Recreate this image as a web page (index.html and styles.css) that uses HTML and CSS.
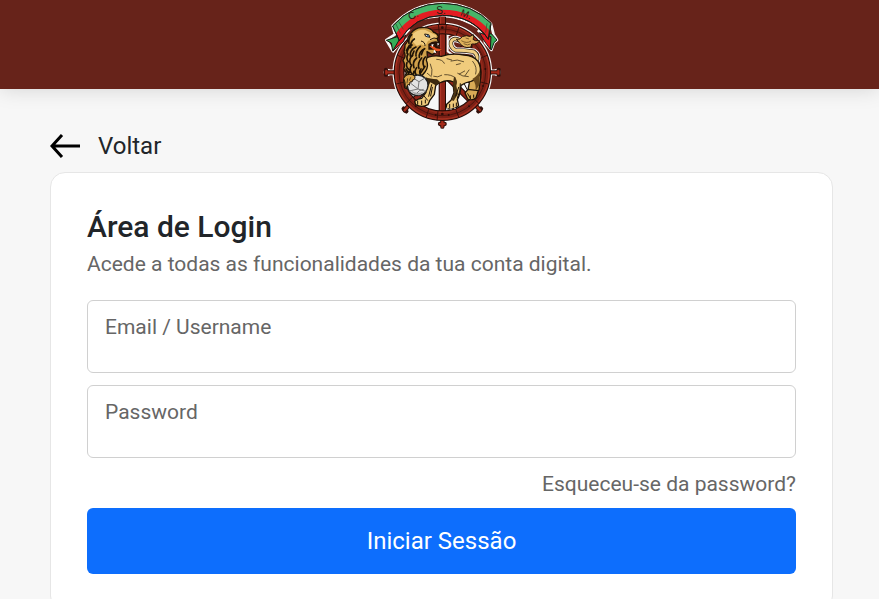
FILE: index.html
```
<!DOCTYPE html>
<html lang="pt">
<head>
  <meta charset="UTF-8" />
  <title>Área de Login</title>
  <meta name="viewport" content="width=device-width, initial-scale=1.0"/>
  <link rel="stylesheet" href="styles.css">
</head>
<body>

  <header class="header">
    <svg class="logo" viewBox="0 0 390 402" role="img" aria-label="CSM">
      <!-- white outline behind the upper half -->
      <g fill="none" stroke="#f7f7f7" stroke-linejoin="round" stroke-linecap="round">
        <circle cx="196" cy="217" r="132" stroke-width="35"/>
        <path d="M55 217H33M337 217h22" stroke-width="17"/>
        <circle cx="31" cy="217" r="6" stroke-width="10"/>
        <circle cx="361" cy="217" r="6" stroke-width="10"/>
        <path d="M47 78Q105 12 196 10Q287 12 342 72L350 104L360 120L351 128L343 150L324 128L322 112Q275 50 196 48Q115 50 70 122L66 132L48 154L28 120L54 103Z" stroke-width="8"/>
      </g>
      <path d="M82 217a114 114 0 0 1 228 0z" fill="#67231a"/>
      <path d="M82 217a114 114 0 0 0 228 0z" fill="#f7f7f7"/>
      <path d="M212 106v48l28 20h58q0-36-36-66q-24-16-50-2z" fill="#67231a" stroke="#f7f7f7" stroke-width="6" stroke-linejoin="round"/>
      <path d="M88 80q42-26 96-26v10q-46 2-84 26z" fill="#67231a"/>
      <path d="M208 54q50 2 96 34l-8 12q-42-32-88-34z" fill="#67231a"/>

      <!-- handles -->
      <g stroke-linecap="round">
        <g stroke="#32100b" stroke-width="13">
          <path d="M55 217H31M337 217h24M196 358v22M94 318l-11 13M298 318l11 13"/>
          <path d="M27 210v14M365 210v14M189 372h14M80 326l8 8M312 326l-8 8"/>
        </g>
        <g stroke="#a52a19" stroke-width="7">
          <path d="M55 217H31M337 217h24M196 358v22M94 318l-11 13M298 318l11 13"/>
          <path d="M28 213v8M364 213v8M190 372h12"/>
        </g>
      </g>

      <!-- wheel -->
      <g fill="none">
        <path d="M196 50V345" stroke="#250c08" stroke-width="22"/>
        <path d="M196 50V345" stroke="#8f2417" stroke-width="16"/>
        <path d="M191 50V345" stroke="#b5392a" stroke-width="3"/>
        <path d="M196 217L112 300M196 217l82 82M212 190l66-66" stroke="#250c08" stroke-width="18"/>
        <path d="M196 217L112 300M196 217l82 82M212 190l66-66" stroke="#8f2417" stroke-width="12"/>
        <circle cx="196" cy="217" r="130" stroke="#220b07" stroke-width="32"/>
        <circle cx="196" cy="217" r="130" stroke="#7d2015" stroke-width="26"/>
        <circle cx="196" cy="217" r="140" stroke="#a63121" stroke-width="4"/>
        <circle cx="196" cy="217" r="130" stroke="#4b150d" stroke-width="3"/>
        <circle cx="196" cy="217" r="121" stroke="#932a1b" stroke-width="4"/>
        <path d="M184 72l3 29M208 72l-3 29M145 80l10 28M247 80l-10 28M62 166l26 12M330 166l-26 12M334 252l-27-7M306 311l-21-21M246 354l-10-27M180 361l3-28M147 354l8-26M87 311l21-21M58 252l27-7" stroke="#3b100a" stroke-width="3"/>
      </g>
      <g fill="#2e0d08">
        <circle cx="325" cy="207" r="3"/><circle cx="318" cy="258" r="3"/><circle cx="276" cy="319" r="3"/>
        <circle cx="215" cy="345" r="3"/><circle cx="176" cy="345" r="3"/><circle cx="116" cy="319" r="3"/>
        <circle cx="196" cy="342" r="4"/><circle cx="196" cy="83" r="4"/>
      </g>

      <!-- tail -->
      <g fill="none" stroke-linecap="round" stroke-linejoin="round">
        <path d="M296 190Q308 167 290 155Q262 151 236 151Q219 142 222 126Q227 112 246 120L262 128" stroke="#f7f7f7" stroke-width="19"/>
        <path d="M296 190Q308 167 290 155Q262 151 236 151Q219 142 222 126Q227 112 246 120L262 128" stroke="#21160a" stroke-width="13"/>
        <path d="M296 190Q308 167 290 155Q262 151 236 151Q219 142 222 126Q227 112 246 120L262 128" stroke="#f0ce83" stroke-width="9"/>
      </g>
      <path d="M238 118Q246 127 254 136Q269 148 287 138Q279 137 284 132Q302 134 308 122Q293 124 288 118Q293 111 289 104Q279 113 269 107Q255 107 248 117Z" fill="#e0b25c" stroke="#21160a" stroke-width="3"/>
      <path d="M253 122q16 10 29 1M260 131q12 7 20 1M266 114l10 3" fill="none" stroke="#4d3514" stroke-width="2"/>

      <!-- body -->
      <g stroke="#1d1308" stroke-width="4" stroke-linejoin="round">
        <path d="M250 210Q256 240 277 248L273 270L288 279L306 270L311 232Q314 206 304 190Z" fill="#d9ab56"/>
        <path d="M273 268L264 279L272 297Q285 304 297 293L304 272Z" fill="#d9ab56"/>
        <path d="M139 179Q160 164 193 169Q224 158 261 165Q289 166 303 184Q314 203 309 224Q297 240 282 244Q266 246 252 256Q250 283 241 299L245 317Q228 332 207 325L209 313L222 301L231 278Q228 262 230 246Q209 238 192 247Q183 249 176 257L172 283L158 302L153 314Q135 324 116 314L113 304Q122 296 134 295L147 277L140 240Q124 209 139 179Z" fill="#f0cb7c"/>
        <path d="M95 209Q83 224 80 240L83 263Q93 270 100 259L116 241L132 225L136 200Z" fill="#d9a851"/>
        <path d="M101 101Q116 79 143 83Q162 84 169 96Q183 101 184 111Q178 119 186 126L187 135Q174 133 164 138L178 143L179 155L166 164L150 155Q153 169 148 181Q157 200 144 216Q128 238 105 227L91 236Q92 219 80 207Q86 196 78 181Q89 167 81 154Q85 143 84 134Q94 125 93 113Z" fill="#d0a04a"/>
      </g>
      <path d="M108 101Q124 87 145 90L163 99L178 106L177 113L166 120L153 122L145 139L133 133L119 137L108 126Z" fill="#f0cb7c"/>

      <!-- dark haunch and belly -->
      <path d="M231 230Q244 240 238 257L243 282L230 303L223 300L231 280L228 249Z" fill="#4a3413"/>
      <path d="M286 237Q303 228 309 210L307 255L295 273Q299 252 286 237Z" fill="#6b4a1c"/>
      <path d="M146 232Q158 237 180 238L190 247L176 256L160 247L152 263Z" fill="#3d2a10"/>

      <!-- mane and shadow strokes -->
      <g fill="none" stroke="#1c1207" stroke-width="5" stroke-linecap="round">
        <path d="M104 104q-11 11-8 26M112 117q-14 10-11 26M105 135q-15 10-15 25M117 141q-20 9-17 27M130 139q-15 13-13 29M143 146q-18 9-16 26M93 162q-7 13 1 23M107 166q-14 12-6 27M119 174q-14 12-8 29M134 174q-14 16-8 31M145 171q-12 12-4 29"/>
        <path d="M90 188q-5 11 5 20M104 195q-9 14 1 28M119 203q-9 11-1 22M132 207q-7 8-1 18M144 199q-9 14-15 22M87 207l10 17M97 136l-9 16M139 149l-6 15M111 153l-6 15M97 213l-6 19M111 214l-5 17"/>
        <path d="M89 242v18M99 236l-6 17M109 235l-5 16" stroke-width="3"/>
        <path d="M164 254l-9 35M142 289l10 12M166 262l-5 26M250 251q2 22-9 43M262 252l8 16M272 281l8 14M245 262l-9 26" stroke-width="3"/>
        <path d="M179 178q18 0 23 12M222 183q19-7 38 2M287 184q15 17 9 38M203 224q20-1 33 10M242 220q15 11 32 10M160 192q8 16 4 34M170 229q12 5 24-3M276 210l-12 17M263 213l-16 9M151 220l12 10M210 176l14 4M238 194l12-3" stroke-width="2"/>
        <path d="M122 303v10M134 303v11M145 300v9M218 313v10M229 312v9M238 309v8M280 287v9M290 285v7" stroke-width="3"/>
      </g>
      <path d="M208 325h4M220 327h4M232 325h4" stroke="#fff" stroke-width="3"/>

      <!-- face -->
      <path d="M143 102l12 2l4 8l-13-3z" fill="#fff" stroke="#20150a" stroke-width="3"/>
      <circle cx="153" cy="108" r="4" fill="#4c6784"/>
      <path d="M154 132Q169 119 187 126L188 134L176 136L195 149Q186 158 171 149L154 149Z" fill="#271308"/>
      <path d="M157 139q13-3 20 6l18 3q-9 11-24 1z" fill="#e8501f"/>
      <path d="M162 134l5 7l3-9zM181 129l1 8l5-6zM169 157l4-8l5 11z" fill="#fff"/>
      <path d="M132 123q13 3 12 15M159 119l12-5l10 2" fill="none" stroke="#211407" stroke-width="3"/>

      <!-- ball -->
      <circle cx="122" cy="256" r="31" fill="#e3e3e3" stroke="#202020" stroke-width="4"/>
      <path d="M106 233l20 12l20-12M126 245l-3 22l-27 6M123 267l23 7M96 246l27 21M120 279q5-9 20-11" fill="none" stroke="#777" stroke-width="3"/>
      <path d="M101 271q17 13 38 4l-9 10q-19 3-29-14z" fill="#a6a6a6"/>
      <path d="M80 235Q88 220 106 224Q119 229 111 239Q105 237 105 246Q97 242 97 256Q92 248 89 263Q83 260 84 247Z" fill="#d8a64c" stroke="#1d1308" stroke-width="3"/>
      <path d="M92 235l-2 15M101 232l-4 10" stroke="#1d1308" stroke-width="2"/>

      <!-- ribbon -->
      <g stroke="#191b16" stroke-width="3" stroke-linejoin="round">
        <path d="M67 108L28 121L43 129L47 153L65 134L76 113Z" fill="#36ad57"/>
        <path d="M67 119L47 153L80 124L86 105Z" fill="#e11b20"/>
        <path d="M326 99L330 125L343 150L351 128L360 120L344 102Z" fill="#36ad57"/>
        <path d="M307 98L322 123L340 148L342 110Z" fill="#e11b20"/>
        <path d="M47 78Q105 12 196 10Q287 12 342 70L334 118Q289 48 196 46Q112 48 67 122Z" fill="#e31d22"/>
        <path d="M47 78Q105 12 196 10Q287 12 342 70L339 93Q286 29 196 29Q110 29 57 100Z" fill="#47b568" stroke="none"/>
        <path d="M47 78Q105 12 196 10Q287 12 342 70L334 118Q289 48 196 46Q112 48 67 122Z" fill="none"/>
        <path d="M57 72l13 28M65 65l14 23M330 70l-4 28M338 76l-3 25" stroke="#24582d" stroke-width="2"/>
      </g>
      <g class="logo-letters">
        <text x="99" y="61" transform="rotate(-25 99 61)">C.</text>
        <text x="178" y="42">S.</text>
        <text x="248" y="46" transform="rotate(22 248 46)">M.</text>
      </g>
    </svg>
  </header>

  <main class="container">
    <a class="back-button" href="#">
      <svg class="back-arrow" viewBox="0 0 30 24" aria-hidden="true">
        <path d="M12 1L2 12L12 23M2 12H30"/>
      </svg>
      <span>Voltar</span>
    </a>

    <form class="card">
      <h1 class="title">Área de Login</h1>
      <p class="subtitle">Acede a todas as funcionalidades da tua conta digital.</p>

      <div class="field">
        <input type="text" id="username" autocomplete="username">
        <label for="username">Email / Username</label>
      </div>
      <div class="field">
        <input type="password" id="password" autocomplete="current-password">
        <label for="password">Password</label>
      </div>

      <a class="forgot" href="#">Esqueceu-se da password?</a>
      <button class="submit" type="submit">Iniciar Sessão</button>
    </form>
  </main>

</body>
</html>
```
FILE: styles.css
```
:root {
  --bg: #f7f7f7;
  --brand: #67231a;
  --primary: #0d6efd;
  --text: #212529;
  --muted: #666;
  --border: #d0d0d0;
}

* {
  box-sizing: border-box;
}

body {
  margin: 0;
  font-family: Roboto, sans-serif;
  background: var(--bg);
  color: var(--text);
}

.header {
  display: flex;
  justify-content: center;
  height: 89px;
  padding-left: 4px;
  background: var(--brand);
  box-shadow: 0 0 20px rgba(0, 0, 0, 0.15);
}

.logo {
  flex: none;
  width: 130px;
  height: 134px;
}

.logo-letters {
  font-family: "Liberation Sans", sans-serif;
  font-size: 30px;
  fill: #252014;
}

.container {
  padding: 39px 46px 0 50px;
}

.back-button {
  display: inline-flex;
  align-items: center;
  gap: 18px;
  height: 36px;
  font-size: 24px;
  line-height: 36px;
  color: var(--text);
  text-decoration: none;
}

.back-arrow {
  width: 30px;
  height: 24px;
  fill: none;
  stroke: #000;
  stroke-width: 3;
}

.card {
  display: flex;
  flex-direction: column;
  margin-top: 8px;
  padding: 36px;
  background: #fff;
  border: 1px solid #e6e6e6;
  border-radius: 15px;
}

.title {
  margin: 0;
  font-size: 30px;
  font-weight: 500;
  line-height: 36px;
}

.subtitle {
  margin: 3px 0 20px;
  font-size: 21px;
  line-height: 32px;
  color: var(--muted);
}

.field {
  position: relative;
  margin-bottom: 12px;
}

.field input {
  display: block;
  width: 100%;
  height: 73px;
  padding: 32px 18px 8px;
  font: inherit;
  font-size: 21px;
  color: var(--text);
  background: #fff;
  border: 1px solid var(--border);
  border-radius: 6px;
}

.field label {
  position: absolute;
  top: 11px;
  left: 18px;
  font-size: 21px;
  line-height: 32px;
  color: var(--muted);
}

.forgot {
  align-self: flex-end;
  margin-bottom: 10px;
  font-size: 21px;
  line-height: 28px;
  color: var(--muted);
  text-decoration: none;
}

.submit {
  height: 66px;
  font: inherit;
  font-size: 24px;
  color: #fff;
  background: var(--primary);
  border: none;
  border-radius: 6px;
  cursor: pointer;
}
```
